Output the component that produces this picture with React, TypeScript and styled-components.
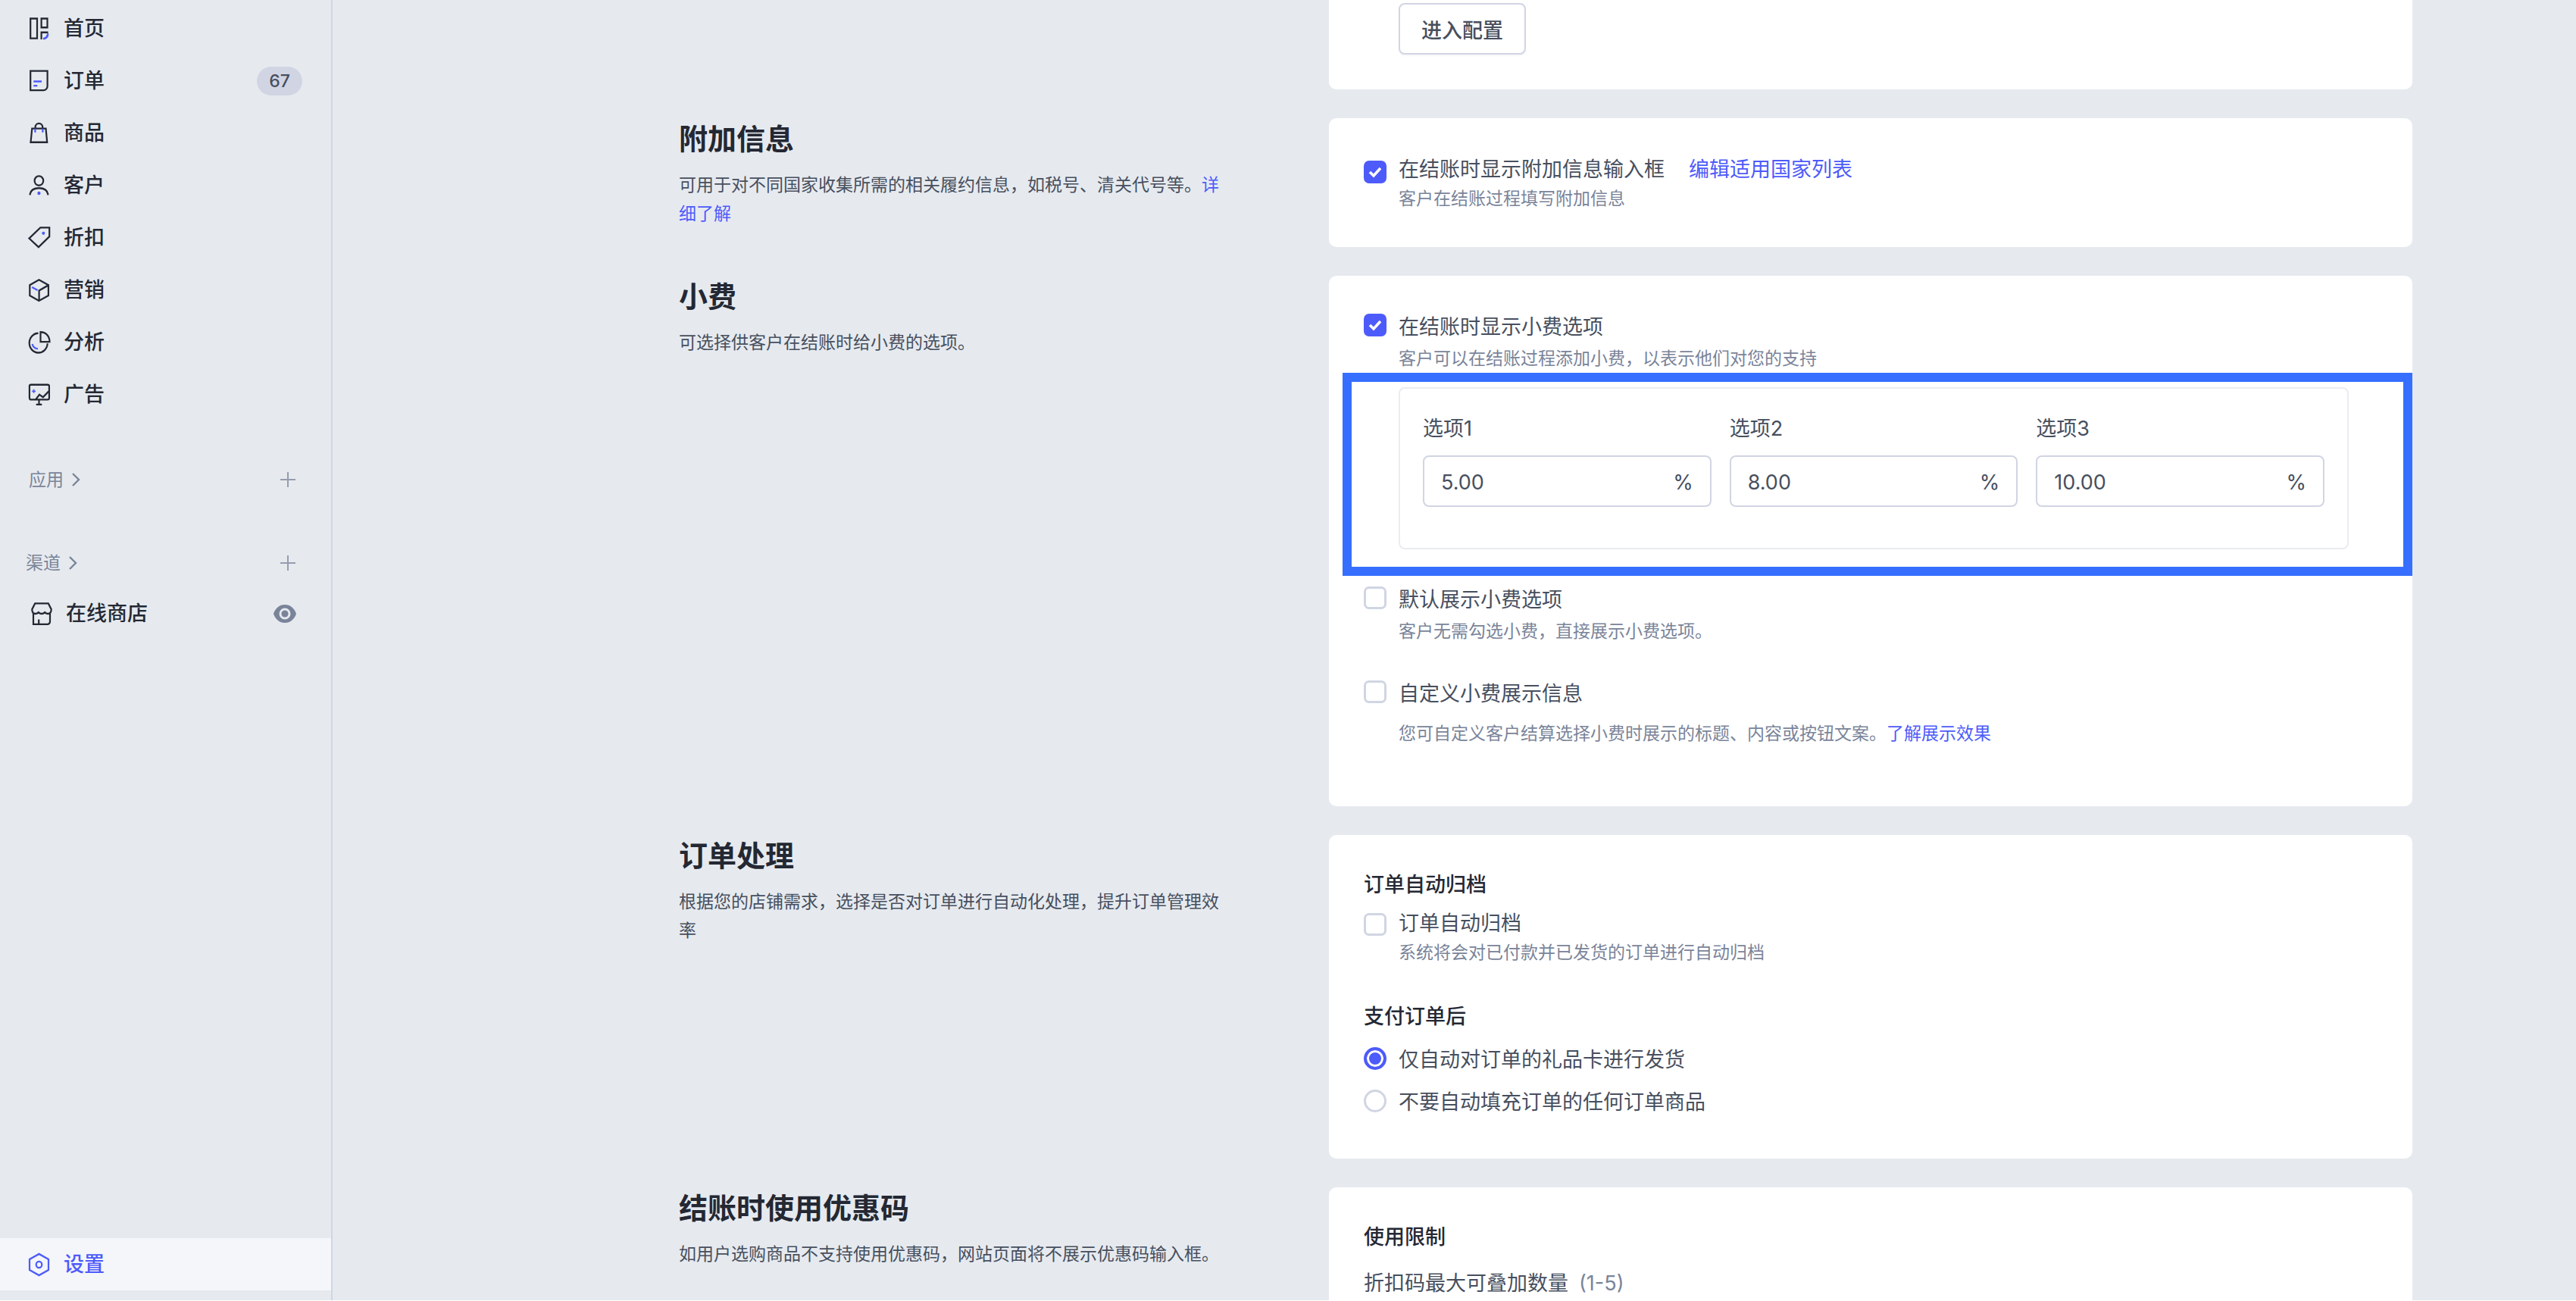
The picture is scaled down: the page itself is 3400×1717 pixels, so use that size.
import React, { useState } from 'react';
import type { ReactNode } from 'react';
import styled, { createGlobalStyle, css } from 'styled-components';

const color = {
  page: '#e6eaef',
  line: '#cfd6e4',
  card: '#ffffff',
  ink: '#242833',
  text: '#474f5e',
  muted: '#7a8499',
  control: '#d1d5e3',
  panel: '#eaecf2',
  active: '#f4f6fa',
  primary: '#4d5bfa',
  frame: '#366fff',
};

const GlobalStyle = createGlobalStyle`
  * { box-sizing: border-box; }
  body {
    margin: 0;
    background: ${color.page};
    color: ${color.text};
    font-family: Inter, "Noto Sans CJK SC", sans-serif;
    font-size: 27px;
  }
  button, input { font: inherit; color: inherit; }
  h2, h3, p { margin: 0; }
`;

const Shell = styled.div`
  display: flex;
  height: 100vh;
  overflow: hidden;
  border-bottom: 1px solid ${color.card};
`;

/* ---------- Sidebar ---------- */

const Sidebar = styled.nav`
  flex: none;
  display: flex;
  flex-direction: column;
  width: 439px;
  padding: 3px 0 13px;
  border-right: 2px solid ${color.line};
`;

const NavLink = styled.a<{ $active?: boolean }>`
  flex: 1;
  display: flex;
  align-items: center;
  gap: 18px;
  font-weight: 500;
  line-height: 40px;
  text-decoration: none;
  color: ${(p) => (p.$active ? color.primary : color.ink)};
`;

const NavRow = styled.div<{ $active?: boolean; $nested?: boolean }>`
  display: flex;
  align-items: center;
  height: 69px;
  padding: 0 38px 0 ${(p) => (p.$nested ? 41 : 38)}px;
  ${(p) =>
    p.$active &&
    css`
      margin-top: auto;
      background: ${color.active};
    `}
`;

const Badge = styled.span`
  width: 60px;
  border-radius: 19px;
  background: ${color.control};
  color: ${color.text};
  font-size: 23px;
  font-weight: 500;
  line-height: 38px;
  text-align: center;
`;

const GroupRow = styled.div<{ $first?: boolean }>`
  display: flex;
  align-items: center;
  justify-content: space-between;
  height: 64px;
  margin-top: 46px;
  padding: 0 38px 0 ${(p) => (p.$first ? 38 : 34)}px;
`;

const PlainButton = styled.button<{ $width?: number }>`
  display: flex;
  align-items: center;
  justify-content: center;
  gap: 6px;
  width: ${(p) => (p.$width ? `${p.$width}px` : 'auto')};
  padding: 0;
  border: 0;
  background: none;
  color: ${color.muted};
  font-size: 23px;
  line-height: 36px;
`;

const Icon = styled.svg.attrs({
  viewBox: '0 0 28 28',
  width: 28,
  height: 30,
  preserveAspectRatio: 'none',
  'aria-hidden': true,
})`
  flex: none;
  overflow: visible;
  fill: none;
  stroke: currentColor;
  stroke-width: 2.2;

  .accent { stroke: ${color.primary}; }
  .dot { fill: ${color.primary}; stroke: none; }
`;

const icons: Record<string, ReactNode> = {
  home: (
    <Icon>
      <path d="M2.2 1.4h8.8v24.4H2.2zM16.6 1.4h7.9v11h-7.9zM16.6 27v-8.6h9" />
      <path className="accent" d="M25.2 20c-.2 3.8-2.3 6-6.2 6.2" strokeWidth="2.6" />
    </Icon>
  ),
  order: (
    <Icon>
      <path d="M2.2 1.500h22.400v18.800a5 5 0 0 1-5 5H2.200z" />
      <path className="accent" d="M6.300 14.500H17M6.300 19.700h5" />
    </Icon>
  ),
  product: (
    <Icon>
      <path d="M4.300 8h18.200l1.700 17H2.500zM8.600 8V6.600a4.800 4.800 0 0 1 9.600 0V8" />
      <path className="accent" d="M8.400 8.200v4.600M18.400 8.200v4.600" />
    </Icon>
  ),
  customer: (
    <Icon>
      <circle cx="13.400" cy="8" r="5.800" />
      <path d="M1.500 25.600c.5-5.600 5.100-8.600 12-8.600s11.400 3 11.900 8.600" />
      <circle className="dot" cx="13.400" cy="23.400" r="2.100" />
    </Icon>
  ),
  discount: (
    <Icon>
      <path d="M.5 14.500 15.300 1.300h11.900v11L12.900 25.400z" />
      <circle className="dot" cx="19.300" cy="8.200" r="2" />
    </Icon>
  ),
  marketing: (
    <Icon>
      <path d="M13.400 1.200 25.900 7.600v13L13.400 27 1.300 20.600v-13zM13.600 27V14.400l12.300-6.600" />
      <path className="accent" d="m4.200 10.200 7.400 3.800" />
    </Icon>
  ),
  analytics: (
    <Icon>
      <path d="M12.500 2.600a12 12 0 1 0 12.200 12.600" />
      <path d="M15.500 1.200v12h12c0-6.900-5-12-12-12z" />
      <path className="accent" d="M4.600 15.800c.8 3.400 3.300 5.600 7.400 6" />
    </Icon>
  ),
  ads: (
    <Icon>
      <rect x=".9" y="1.600" width="26" height="18.400" rx="2" />
      <path d="m9 20 5-6.200 4.800 3.200 7.600-7.400M13.500 20v6M9.700 26h7.600" />
      <path className="accent" d="M6.600 7.200v4.800M4.200 9.600H9" strokeWidth="1.600" />
    </Icon>
  ),
  store: (
    <Icon>
      <path d="M5.200 1.300h17.600l3.900 7.200c0 3.600-1.500 5.500-4.300 5.500-2 0-3-.7-4.200-1.800-1.300 1.200-2.500 1.800-4.200 1.800s-2.900-.6-4.200-1.800C8.600 13.300 7.600 14 5.600 14c-2.800 0-4.300-1.900-4.300-5.500z" />
      <path d="M3 13.500V27h18.500a3.500 3.500 0 0 0 3.500-3.500v-10M10.200 27v-6" />
    </Icon>
  ),
  settings: (
    <Icon>
      <path d="M13.500 .8 26 7.400v13.200l-12.500 6.600L1 20.600V7.400z" />
      <circle cx="13.500" cy="14" r="3.800" />
    </Icon>
  ),
};

const Stroke = styled.svg`
  flex: none;
  fill: none;
  stroke: currentColor;
`;

const Chevron = () => (
  <Stroke width="20" height="20" viewBox="0 0 20 20" strokeWidth="2.400" aria-hidden>
    <path d="m6 2 8 8-8 8" />
  </Stroke>
);

const Plus = () => (
  <Stroke width="20" height="20" viewBox="0 0 20 20" strokeWidth="2" opacity=".75" aria-hidden>
    <path d="M10 0v20M0 10h20" />
  </Stroke>
);

const Eye = () => (
  <Stroke width="30" height="24" viewBox="0 0 30 24" aria-hidden>
    <path
      fill="currentColor"
      stroke="none"
      fillRule="evenodd"
      d="M15 0c7 0 12.500 4.600 15 12-2.500 7.400-8 12-15 12S2.500 19.400 0 12C2.500 4.600 8 0 15 0zm0 4.500a7.500 7.500 0 1 0 0 15 7.500 7.500 0 0 0 0-15z"
    />
    <circle cx="15" cy="12" r="4.600" fill="currentColor" stroke="none" />
  </Stroke>
);

/* ---------- Page sections ---------- */

const Main = styled.main`
  flex: 1;
  display: flex;
  flex-direction: column;
  gap: 38px;
  min-width: 0;
  padding: 0 216px 0 457px;
`;

const Section = styled.section`
  flex: none;
  display: grid;
  grid-template-columns: 3fr 5fr;
  align-items: start;
`;

const Intro = styled.header`
  padding-right: 138px;
`;

const SectionTitle = styled.h2`
  margin-bottom: 15px;
  color: ${color.ink};
  font-size: 38px;
  font-weight: 600;
  line-height: 54px;
`;

const Description = styled.p`
  font-size: 23px;
  line-height: 38px;
`;

const TextLink = styled.a`
  color: ${color.primary};
  text-decoration: none;
`;

const Card = styled.div<{ $cut?: boolean; $bottom?: number }>`
  padding: ${(p) => (p.$cut ? 4 : 46)}px 46px ${(p) => p.$bottom ?? 46}px;
  border-radius: ${(p) => (p.$cut ? '0 0 10px 10px' : '10px')};
  background: ${color.card};
`;

const OutlineButton = styled.button`
  display: block;
  height: 68px;
  margin-left: 46px;
  padding: 0 28px;
  border: 2px solid ${color.control};
  border-radius: 8px;
  background: ${color.card};
  box-shadow: 0 2px 2px rgba(36, 40, 51, 0.04);
  font-weight: 500;
`;

const CardTitle = styled.h3<{ $gap: number; $top?: number }>`
  margin: ${(p) => p.$top ?? 0}px 0 ${(p) => p.$gap}px;
  color: ${color.ink};
  font-size: 27px;
  font-weight: 500;
  line-height: 40px;
`;

/* ---------- Choices ---------- */

const ChoiceRow = styled.div<{ $top?: number; $drop?: number }>`
  display: grid;
  grid-template-columns: 30px 1fr;
  column-gap: 16px;
  margin-top: ${(p) => p.$top ?? 0}px;

  > :first-child { margin-top: ${(p) => p.$drop ?? 4}px; }
`;

const LabelLine = styled.div<{ $compact?: boolean }>`
  display: flex;
  gap: 32px;
  line-height: ${(p) => (p.$compact ? 38 : 44)}px;
`;

const Hint = styled.p<{ $top?: number }>`
  margin-top: ${(p) => p.$top ?? 0}px;
  color: ${color.muted};
  font-size: 23px;
  line-height: 38px;
`;

const TickBox = styled.span`
  display: grid;
  width: 30px;
  height: 30px;

  > * { grid-area: 1 / 1; }
  svg { pointer-events: none; }
`;

const Tick = styled.input.attrs({ type: 'checkbox' })`
  appearance: none;
  width: 30px;
  height: 30px;
  margin: 0;
  border: 3px solid ${color.control};
  border-radius: 7px;
  background: ${color.card};

  &:checked {
    border-color: ${color.primary};
    background: ${color.primary};
  }
`;

const Radio = styled.input.attrs({ type: 'radio' })`
  appearance: none;
  width: 30px;
  height: 30px;
  margin: 0;
  border: 3px solid ${color.control};
  border-radius: 50%;
  background: ${color.card};

  &:checked {
    border: 4px solid ${color.primary};
    background: ${color.primary};
    box-shadow: inset 0 0 0 3px ${color.card};
  }
`;

interface CheckProps {
  id: string;
  label: string;
  hint: ReactNode;
  initial?: boolean;
  compact?: boolean;
  top?: number;
  drop?: number;
  hintTop?: number;
  aside?: ReactNode;
}

function Check({ id, label, hint, initial = false, compact, top, drop, hintTop, aside }: CheckProps) {
  const [on, setOn] = useState(initial);
  return (
    <ChoiceRow $top={top} $drop={drop}>
      <TickBox>
        <Tick id={id} checked={on} onChange={() => setOn(!on)} />
        {on && (
          <Stroke width="30" height="30" viewBox="0 0 30 30" strokeWidth="3.600" color="#fff" aria-hidden>
            <path d="m8 15 5 5 9-10" />
          </Stroke>
        )}
      </TickBox>
      <div>
        <LabelLine $compact={compact}>
          <label htmlFor={id}>{label}</label>
          {aside}
        </LabelLine>
        <Hint $top={hintTop}>{hint}</Hint>
      </div>
    </ChoiceRow>
  );
}

/* ---------- Tip options ---------- */

const Highlight = styled.div`
  margin: 0 -46px 0 -28px;
  padding: 7px 72px 23px 62px;
  border: 12px solid ${color.frame};
`;

const OptionPanel = styled.div`
  display: grid;
  grid-template-columns: repeat(3, minmax(0, 1fr));
  gap: 24px;
  padding: 32px 30px 54px;
  border: 2px solid ${color.panel};
  border-radius: 8px;
`;

const Option = styled.div`
  display: flex;
  flex-direction: column;
  gap: 14px;
  line-height: 42px;
`;

const PercentBox = styled.div`
  display: flex;
  align-items: center;
  height: 68px;
  padding: 3px 22px 0;
  border: 2px solid ${color.control};
  border-radius: 8px;
`;

const PercentInput = styled.input`
  flex: 1;
  width: 0;
  min-width: 0;
  padding: 0;
  border: 0;
  outline: 0;
  background: none;
`;

const Range = styled.span`
  margin-left: 14px;
  color: ${color.muted};
`;

const LimitLine = styled.p`
  line-height: 40px;
`;

const menu: [string, string, number?][] = [
  ['home', '首页'],
  ['order', '订单', 67],
  ['product', '商品'],
  ['customer', '客户'],
  ['discount', '折扣'],
  ['marketing', '营销'],
  ['analytics', '分析'],
  ['ads', '广告'],
];

const tips = ['5.00', '8.00', '10.00'];

const shipping = ['仅自动对订单的礼品卡进行发货', '不要自动填充订单的任何订单商品'];

export default function App() {
  const [ship, setShip] = useState(0);
  return (
    <>
      <GlobalStyle />
      <Shell>
        <Sidebar>
          {menu.map(([icon, name, count]) => (
            <NavRow key={icon}>
              <NavLink href="#">
                {icons[icon]}
                {name}
              </NavLink>
              {count && <Badge>{count}</Badge>}
            </NavRow>
          ))}
          <GroupRow $first>
            <PlainButton>
              应用
              <Chevron />
            </PlainButton>
            <PlainButton $width={38} aria-label="添加应用">
              <Plus />
            </PlainButton>
          </GroupRow>
          <GroupRow>
            <PlainButton>
              渠道
              <Chevron />
            </PlainButton>
            <PlainButton $width={38} aria-label="添加渠道">
              <Plus />
            </PlainButton>
          </GroupRow>
          <NavRow $nested>
            <NavLink href="#">
              {icons.store}
              在线商店
            </NavLink>
            <PlainButton $width={46} aria-label="查看在线商店">
              <Eye />
            </PlainButton>
          </NavRow>
          <NavRow $active>
            <NavLink href="#" $active>
              {icons.settings}
              设置
            </NavLink>
          </NavRow>
        </Sidebar>

        <Main>
          <Section>
            <Intro />
            <Card $cut>
              <OutlineButton>进入配置</OutlineButton>
            </Card>
          </Section>

          <Section>
            <Intro>
              <SectionTitle>附加信息</SectionTitle>
              <Description>
                可用于对不同国家收集所需的相关履约信息，如税号、清关代号等。
                <TextLink href="#">详细了解</TextLink>
              </Description>
            </Intro>
            <Card $bottom={45}>
              <Check
                id="extra-info"
                initial
                compact
                top={3}
                drop={7}
                label="在结账时显示附加信息输入框"
                hint="客户在结账过程填写附加信息"
                aside={<TextLink href="#">编辑适用国家列表</TextLink>}
              />
            </Card>
          </Section>

          <Section>
            <Intro>
              <SectionTitle>小费</SectionTitle>
              <Description>可选择供客户在结账时给小费的选项。</Description>
            </Intro>
            <Card $bottom={77}>
              <Check
                id="show-tips"
                initial
                label="在结账时显示小费选项"
                hint="客户可以在结账过程添加小费，以表示他们对您的支持"
              />
              <Highlight>
                <OptionPanel>
                  {tips.map((value, i) => (
                    <Option key={value}>
                      <label htmlFor={`tip-${i}`}>选项{i + 1}</label>
                      <PercentBox>
                        <PercentInput id={`tip-${i}`} defaultValue={value} />
                        <span>%</span>
                      </PercentBox>
                    </Option>
                  ))}
                </OptionPanel>
              </Highlight>
              <Check
                id="default-tips"
                top={10}
                label="默认展示小费选项"
                hint="客户无需勾选小费，直接展示小费选项。"
              />
              <Check
                id="custom-tips"
                top={42}
                hintTop={11}
                label="自定义小费展示信息"
                hint={
                  <>
                    您可自定义客户结算选择小费时展示的标题、内容或按钮文案。
                    <TextLink href="#">了解展示效果</TextLink>
                  </>
                }
              />
            </Card>
          </Section>

          <Section>
            <Intro>
              <SectionTitle>订单处理</SectionTitle>
              <Description>根据您的店铺需求，选择是否对订单进行自动化处理，提升订单管理效率</Description>
            </Intro>
            <Card $bottom={52}>
              <CardTitle $gap={12}>订单自动归档</CardTitle>
              <Check
                id="archive"
                compact
                drop={5}
                label="订单自动归档"
                hint="系统将会对已付款并已发货的订单进行自动归档"
              />
              <CardTitle $top={46} $gap={15}>支付订单后</CardTitle>
              {shipping.map((text, i) => (
                <ChoiceRow key={text} $top={i ? 12 : 0} $drop={5}>
                  <Radio id={`ship-${i}`} name="ship" checked={ship === i} onChange={() => setShip(i)} />
                  <LabelLine>
                    <label htmlFor={`ship-${i}`}>{text}</label>
                  </LabelLine>
                </ChoiceRow>
              ))}
            </Card>
          </Section>

          <Section>
            <Intro>
              <SectionTitle>结账时使用优惠码</SectionTitle>
              <Description>如用户选购商品不支持使用优惠码，网站页面将不展示优惠码输入框。</Description>
            </Intro>
            <Card>
              <CardTitle $gap={21}>使用限制</CardTitle>
              <LimitLine>
                折扣码最大可叠加数量<Range>(1-5)</Range>
              </LimitLine>
            </Card>
          </Section>
        </Main>
      </Shell>
    </>
  );
}
